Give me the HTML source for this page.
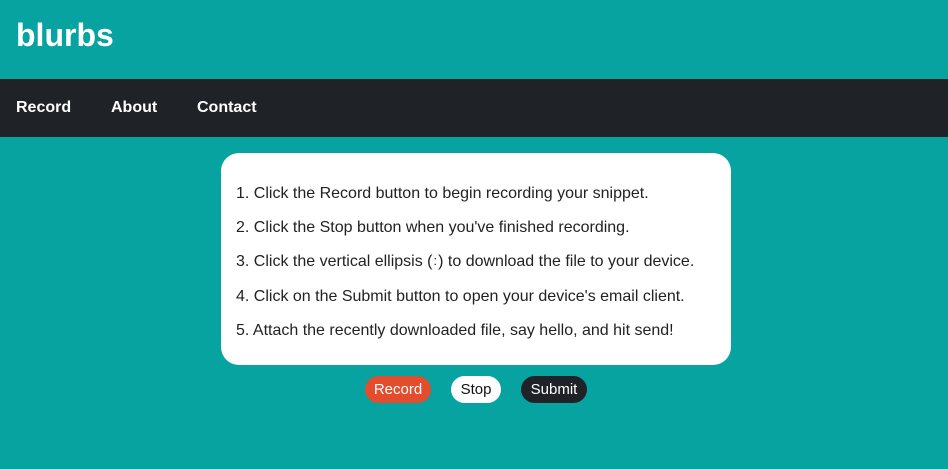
<!DOCTYPE html>
<html><head><style>
body{margin:0;background:#06a3a0;font-family:"Liberation Sans",sans-serif;width:948px;height:469px;overflow:hidden;position:relative}
h1{position:absolute;left:16px;top:17px;margin:0;color:#fff;font-size:32px;font-weight:bold}
nav{position:absolute;top:79px;left:0;width:948px;height:58px;background:#1f2226}
nav span{position:absolute;top:20px;color:#fff;font-weight:bold;font-size:16px}
.card{position:absolute;left:221px;top:153px;width:510px;height:212px;background:#fff;border-radius:18px}
.card p{position:absolute;left:15px;margin:0;font-size:16px;line-height:18px;color:#222;white-space:nowrap}
.btn{position:absolute;top:376px;height:27px;line-height:27px;border-radius:14px;font-size:15px;text-align:center}
</style></head><body>
<h1>blurbs</h1>
<nav><span style="left:16px">Record</span><span style="left:111px">About</span><span style="left:197px">Contact</span></nav>
<div class="card">
<p style="top:32px">1. Click the Record button to begin recording your snippet.</p>
<p style="top:66px">2. Click the Stop button when you've finished recording.</p>
<p style="top:100px">3. Click the vertical ellipsis (<span style="font-size:13px;position:relative;top:-1px;margin:0 1px">:</span>) to download the file to your device.</p>
<p style="top:135px">4. Click on the Submit button to open your device's email client.</p>
<p style="top:169px">5. Attach the recently downloaded file, say hello, and hit send!</p>
</div>
<div class="btn" style="left:365px;width:66px;background:#e44c2e;color:#fff">Record</div>
<div class="btn" style="left:451px;width:50px;background:#fff;color:#111">Stop</div>
<div class="btn" style="left:521px;width:66px;background:#1f2226;color:#fff">Submit</div>
</body></html>
